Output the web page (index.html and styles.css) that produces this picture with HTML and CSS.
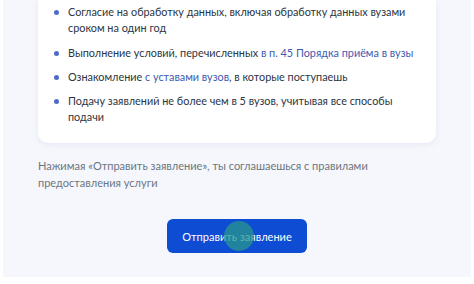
FILE: index.html
```html
<!DOCTYPE html>
<html lang="ru">
<head>
<meta charset="utf-8">
<link rel="stylesheet" href="styles.css">
</head>
<body>
<div class="page">
  <div class="card">
    <ul class="list">
      <li>Согласие на обработку данных, включая обработку данных вузами сроком на один год</li>
      <li>Выполнение условий, перечисленных <a href="#">в п. 45 Порядка приёма в вузы</a></li>
      <li>Ознакомление <a href="#">с уставами вузов</a>, в которые поступаешь</li>
      <li>Подачу заявлений не более чем в 5 вузов, учитывая все способы подачи</li>
    </ul>
  </div>
  <p class="note">Нажимая «Отправить заявление», ты соглашаешься с правилами предоставления услуги</p>
  <div class="actions">
    <button class="btn">Отправить заявление<span class="ripple"></span></button>
  </div>
</div>
</body>
</html>
```

FILE: styles.css
```css
html, body {
  margin: 0;
  padding: 0;
  background: #ffffff;
}
body {
  font-family: Lato, "Noto Sans", sans-serif;
  width: 474px;
  height: 284px;
  overflow: hidden;
}
.page {
  margin: 0 3px;
  height: 277px;
  background: #f5f7fc;
  padding: 0 35px;
  box-sizing: border-box;
}
.card {
  background: #ffffff;
  border-radius: 0 0 10px 10px;
  box-shadow: 0 2px 6px rgba(120, 140, 180, 0.12);
  padding: 4px 14px 18px 16px;
}
.list {
  list-style: none;
  margin: 0;
  padding: 0;
  display: flex;
  flex-direction: column;
  gap: 8px;
}
.list li {
  position: relative;
  padding-left: 14px;
  font-size: 10.85px;
  line-height: 16px;
  color: #2c3542;
}
.list li:nth-child(2) {
  margin-top: 1px;
}
.list li::before {
  content: "";
  position: absolute;
  left: 0;
  top: 6px;
  width: 5px;
  height: 5px;
  border-radius: 50%;
  background: #4d6bc9;
}
.list a {
  color: #3d5bb0;
  text-decoration: none;
}
.note {
  margin: 14px 0 0;
  font-size: 11px;
  line-height: 17px;
  color: #6b7580;
  padding-right: 60px;
}
.actions {
  display: flex;
  justify-content: center;
  margin-top: 28px;
}
.btn {
  position: relative;
  width: 140px;
  height: 34px;
  border: none;
  border-radius: 6px;
  background: #0d4cd3;
  color: #ffffff;
  font-family: Lato, "Noto Sans", sans-serif;
  font-size: 11px;
  padding: 0;
  overflow: hidden;
}
.ripple {
  position: absolute;
  left: 57px;
  top: 2px;
  width: 30px;
  height: 30px;
  border-radius: 50%;
  background: rgba(40, 150, 140, 0.75);
}
```
